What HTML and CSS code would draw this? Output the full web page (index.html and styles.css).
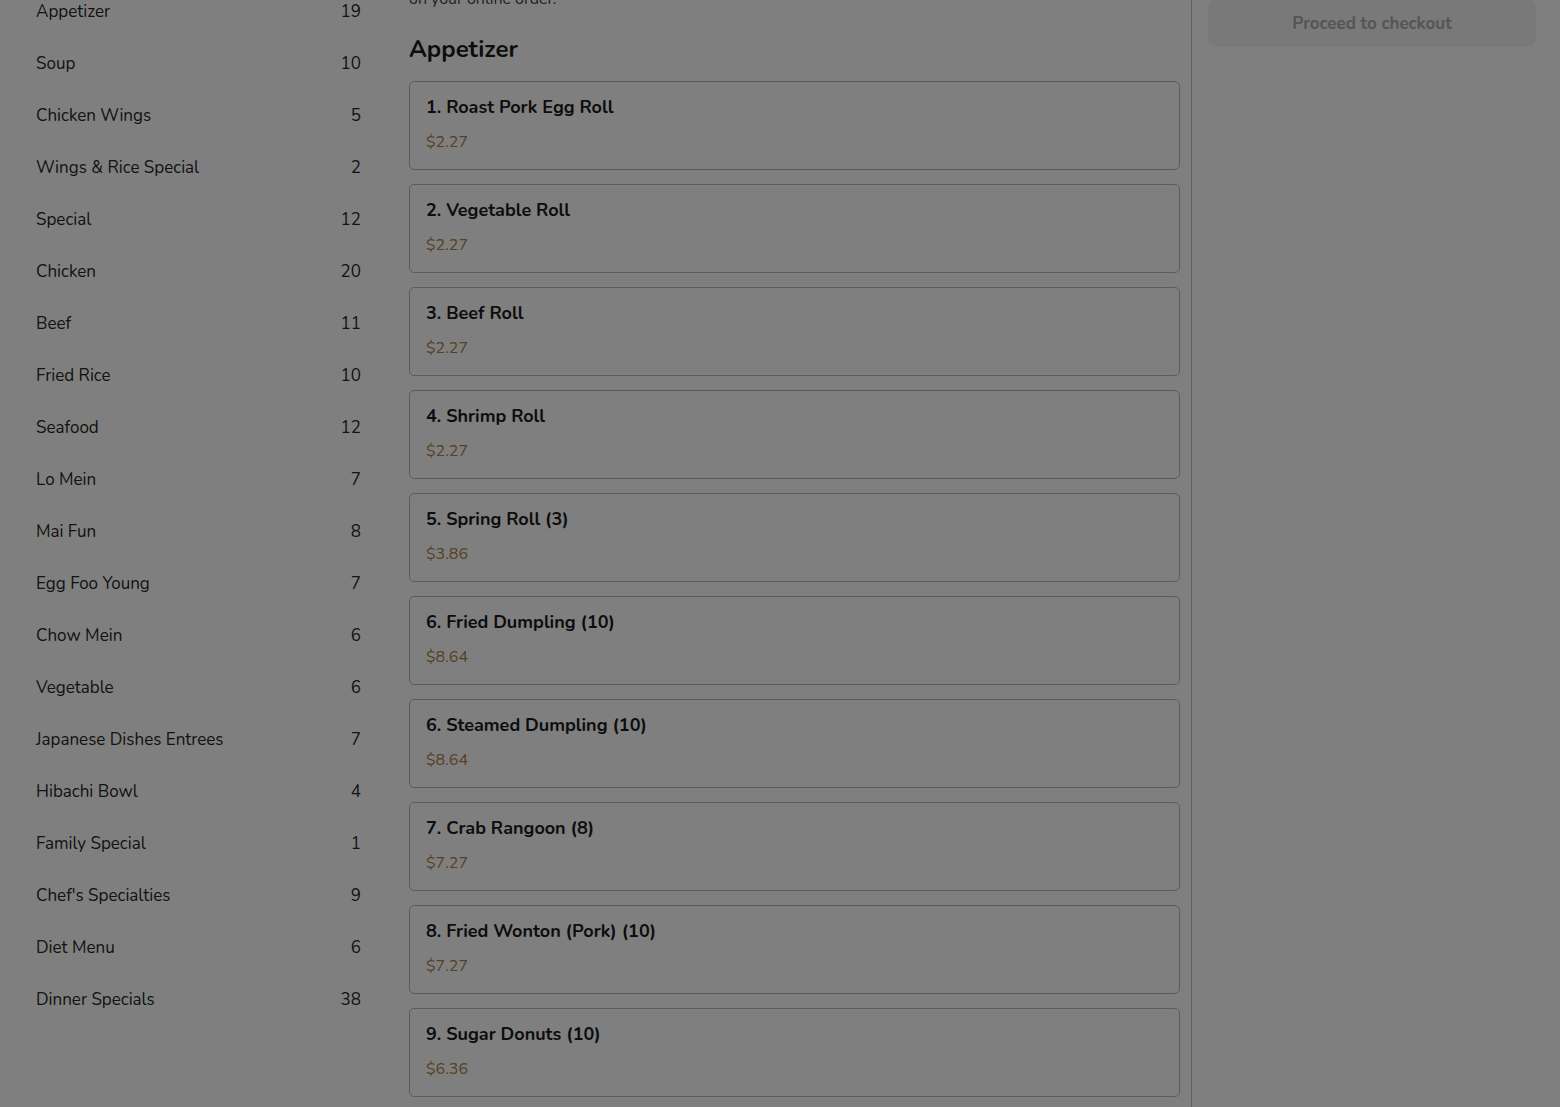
FILE: index.html
```html
<!DOCTYPE html>
<html lang="en">
<head>
<meta charset="utf-8">
<title>Menu</title>
<link rel="stylesheet" href="styles.css">
</head>
<body>
<div class="page">
  <aside class="cats">
    <ul class="cat-list">
      <li class="cat"><span>Appetizer</span><span>19</span></li>
      <li class="cat"><span>Soup</span><span>10</span></li>
      <li class="cat"><span>Chicken Wings</span><span>5</span></li>
      <li class="cat"><span>Wings &amp; Rice Special</span><span>2</span></li>
      <li class="cat"><span>Special</span><span>12</span></li>
      <li class="cat"><span>Chicken</span><span>20</span></li>
      <li class="cat"><span>Beef</span><span>11</span></li>
      <li class="cat"><span>Fried Rice</span><span>10</span></li>
      <li class="cat"><span>Seafood</span><span>12</span></li>
      <li class="cat"><span>Lo Mein</span><span>7</span></li>
      <li class="cat"><span>Mai Fun</span><span>8</span></li>
      <li class="cat"><span>Egg Foo Young</span><span>7</span></li>
      <li class="cat"><span>Chow Mein</span><span>6</span></li>
      <li class="cat"><span>Vegetable</span><span>6</span></li>
      <li class="cat"><span>Japanese Dishes Entrees</span><span>7</span></li>
      <li class="cat"><span>Hibachi Bowl</span><span>4</span></li>
      <li class="cat"><span>Family Special</span><span>1</span></li>
      <li class="cat"><span>Chef's Specialties</span><span>9</span></li>
      <li class="cat"><span>Diet Menu</span><span>6</span></li>
      <li class="cat"><span>Dinner Specials</span><span>38</span></li>
    </ul>
  </aside>
  <main class="menu">
    <p class="note">on your online order.</p>
    <h2 class="section-title">Appetizer</h2>
    <div class="items">
      <div class="item"><div class="item-name">1. Roast Pork Egg Roll</div><div class="item-price">$2.27</div></div>
      <div class="item"><div class="item-name">2. Vegetable Roll</div><div class="item-price">$2.27</div></div>
      <div class="item"><div class="item-name">3. Beef Roll</div><div class="item-price">$2.27</div></div>
      <div class="item"><div class="item-name">4. Shrimp Roll</div><div class="item-price">$2.27</div></div>
      <div class="item"><div class="item-name">5. Spring Roll (3)</div><div class="item-price">$3.86</div></div>
      <div class="item"><div class="item-name">6. Fried Dumpling (10)</div><div class="item-price">$8.64</div></div>
      <div class="item"><div class="item-name">6. Steamed Dumpling (10)</div><div class="item-price">$8.64</div></div>
      <div class="item"><div class="item-name">7. Crab Rangoon (8)</div><div class="item-price">$7.27</div></div>
      <div class="item"><div class="item-name">8. Fried Wonton (Pork) (10)</div><div class="item-price">$7.27</div></div>
      <div class="item"><div class="item-name">9. Sugar Donuts (10)</div><div class="item-price">$6.36</div></div>
    </div>
  </main>
  <aside class="cart">
    <button class="checkout" disabled>Proceed to checkout</button>
  </aside>
</div>
<div class="backdrop"></div>
</body>
</html>
```

FILE: styles.css
```css
html, body {
  margin: 0;
  padding: 0;
  height: 100%;
  overflow: hidden;
}
body {
  background: #ffffff;
  font-family: "Nunito", "Lato", "Noto Sans", sans-serif;
  color: #333333;
}
.page {
  display: grid;
  grid-template-columns: 385px 806px 369px;
  height: 1107px;
}
.cats {
  padding: 0 24px 0 36px;
}
.cat-list {
  list-style: none;
  margin: -15px 0 0;
  padding: 0;
}
.cat {
  display: flex;
  justify-content: space-between;
  align-items: center;
  height: 52px;
  font-size: 17px;
  color: #262626;
}
.menu {
  padding: 0 11px 0 24px;
  border-right: 1px solid #ececec;
  margin-right: -1px;
}
.note {
  margin: -13px 0 0;
  font-size: 16px;
  line-height: 24px;
  color: #444444;
}
.section-title {
  margin: 22px 0 16px;
  font-size: 24px;
  line-height: 32px;
  font-weight: 700;
  color: #1a1a1a;
}
.items {
  display: flex;
  flex-direction: column;
  gap: 14px;
}
.item {
  border: 1px solid #b9b9b9;
  border-radius: 5px;
  padding: 13px 16px 15px;
}
.item-name {
  font-size: 18px;
  line-height: 24px;
  font-weight: 700;
  color: #1a1a1a;
}
.item-price {
  margin-top: 11px;
  font-size: 16px;
  line-height: 24px;
  color: #ad8246;
}
.cart {
  border-left: 1px solid #bdbdbd;
  padding: 0 24px 0 16px;
}
.checkout {
  display: block;
  width: 100%;
  height: 48px;
  margin-top: -1px;
  border: none;
  border-radius: 8px;
  background: #f3f3f3;
  color: #aaaaaa;
  font-family: inherit;
  font-size: 17px;
  font-weight: 700;
}
.backdrop {
  position: fixed;
  inset: 0;
  background: rgba(0, 0, 0, 0.5);
}
```
